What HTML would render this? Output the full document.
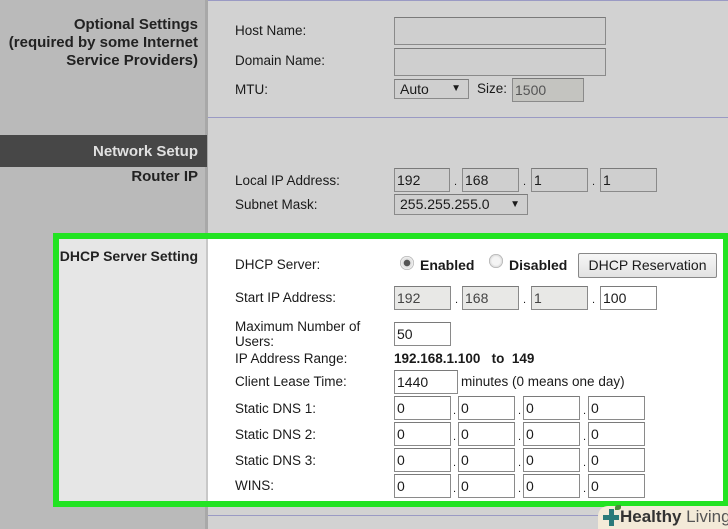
<!DOCTYPE html>
<html><head><meta charset="utf-8"><style>
*{box-sizing:border-box;margin:0;padding:0}
html,body{width:728px;height:529px;overflow:hidden}
body{position:relative;background:#d2d2d2;font-family:"Liberation Sans",Arial,sans-serif;font-size:13.5px;color:#1a1a1a}
.a{position:absolute;white-space:nowrap}
.in{position:absolute;border:1px solid #8a8a8a;background:#fff;font-size:14px;padding:2px 0 0 2px;line-height:18px;border-top-color:#7a7a7a}
.g{background:#cfcfcf}
.d{background:#e8e8e6}
.dot{position:absolute;font-size:11px}
.lh{font-weight:bold;text-align:right;font-size:15px}
</style></head><body>
<div class="a" style="left:0;top:0;width:207px;height:529px;background:#bababa"></div>
<div class="a" style="left:205px;top:0;width:3px;height:529px;background:#a8a8a8"></div>
<div class="a" style="left:208px;top:0;width:520px;height:1px;background:#9a9ac4"></div>
<div class="a" style="left:208px;top:117px;width:520px;height:1px;background:#9a9ac4"></div>
<div class="a" style="left:0;top:135px;width:207px;height:32px;background:#474747"></div>
<div class="a lh" style="right:530px;top:16px;line-height:18px;color:#222">Optional Settings<br>(required by some Internet<br>Service Providers)</div>
<div class="a lh" style="right:530px;top:143px;color:#e0e0e0">Network Setup</div>
<div class="a lh" style="right:530px;top:168px;color:#222">Router IP</div>

<div class="a" style="left:235px;top:23px">Host Name:</div>
<div class="a" style="left:235px;top:53px">Domain Name:</div>
<div class="a" style="left:235px;top:82px">MTU:</div>
<div class="in g" style="left:394px;top:17px;width:212px;height:28px"></div>
<div class="in g" style="left:394px;top:48px;width:212px;height:28px"></div>
<div class="in g" style="left:394px;top:79px;width:75px;height:20px;padding:0 0 0 5px;line-height:18px">Auto<span style="position:absolute;right:7px;font-size:10px">▼</span></div>
<div class="a" style="left:477px;top:81px">Size:</div>
<div class="in" style="left:512px;top:78px;width:72px;height:24px;background:#c4c4c0;color:#555">1500</div>

<div class="a" style="left:235px;top:173px">Local IP Address:</div>
<div class="a" style="left:235px;top:197px">Subnet Mask:</div>
<div class="in g" style="left:394px;top:168px;width:56px;height:24px">192</div>
<div class="dot" style="left:454px;top:176px">.</div>
<div class="in g" style="left:462px;top:168px;width:57px;height:24px">168</div>
<div class="dot" style="left:523px;top:176px">.</div>
<div class="in g" style="left:531px;top:168px;width:57px;height:24px">1</div>
<div class="dot" style="left:592px;top:176px">.</div>
<div class="in g" style="left:600px;top:168px;width:57px;height:24px">1</div>
<div class="in g" style="left:394px;top:194px;width:134px;height:21px;padding:0 0 0 5px;line-height:19px">255.255.255.0<span style="position:absolute;right:7px;font-size:10px">▼</span></div>

<div class="a" style="left:53px;top:233px;width:675px;height:274px;border:6px solid #22e322;border-right-width:5px;background:#fff"></div>
<div class="a" style="left:59px;top:239px;width:147px;height:262px;background:#e6e6e6"></div>
<div class="a" style="left:206px;top:239px;width:2px;height:262px;background:#c8c8c8"></div>
<div class="a" style="left:208px;top:515px;width:520px;height:1px;background:#9a9ac4"></div>
<div class="a lh" style="right:530px;top:248px;font-size:14px;color:#222">DHCP Server Setting</div>

<div class="a" style="left:235px;top:257px">DHCP Server:</div>
<div class="a" style="left:400px;top:256px;width:14px;height:14px;border-radius:50%;background:radial-gradient(circle,#555 0 3px,#ddd 3.5px,#eee 6px,#999 7px)"></div>
<div class="a" style="left:420px;top:257px;font-weight:bold;font-size:14px">Enabled</div>
<div class="a" style="left:489px;top:254px;width:14px;height:14px;border-radius:50%;background:radial-gradient(circle,#f4f4f4 0 4px,#ddd 6px,#999 7px)"></div>
<div class="a" style="left:509px;top:257px;font-weight:bold;font-size:14px">Disabled</div>
<div class="a" style="left:578px;top:253px;width:139px;height:25px;border:1px solid #888;border-radius:2px;background:linear-gradient(#f6f6f6,#e2e2e2);text-align:center;line-height:23px;font-size:14px">DHCP Reservation</div>

<div class="a" style="left:235px;top:290px">Start IP Address:</div>
<div class="in d" style="left:394px;top:286px;width:57px;height:24px;color:#444">192</div>
<div class="dot" style="left:455px;top:294px">.</div>
<div class="in d" style="left:462px;top:286px;width:57px;height:24px;color:#444">168</div>
<div class="dot" style="left:523px;top:294px">.</div>
<div class="in d" style="left:531px;top:286px;width:57px;height:24px;color:#444">1</div>
<div class="dot" style="left:592px;top:294px">.</div>
<div class="in" style="left:600px;top:286px;width:57px;height:24px">100</div>

<div class="a" style="left:235px;top:319px;line-height:15px">Maximum Number of<br>Users:</div>
<div class="in" style="left:394px;top:322px;width:57px;height:24px">50</div>
<div class="a" style="left:235px;top:351px">IP Address Range:</div>
<div class="a" style="left:394px;top:351px;font-weight:bold">192.168.1.100 &nbsp;&nbsp;to &nbsp;149</div>
<div class="a" style="left:235px;top:374px">Client Lease Time:</div>
<div class="in" style="left:394px;top:370px;width:64px;height:24px">1440</div>
<div class="a" style="left:461px;top:374px">minutes (0 means one day)</div>

<div class="a" style="left:235px;top:401px">Static DNS 1:</div>
<div class="a" style="left:235px;top:427px">Static DNS 2:</div>
<div class="a" style="left:235px;top:453px">Static DNS 3:</div>
<div class="a" style="left:235px;top:478px">WINS:</div>
<div id="rows"></div>
<script>
var h='';[396,422,448,474].forEach(function(y){[394,458,523,588].forEach(function(x,i){if(i)h+='<div class="dot" style="left:'+(x-5)+'px;top:'+(y+9)+'px">.</div>';h+='<div class="in" style="left:'+x+'px;top:'+y+'px;width:57px;height:24px">0</div>';});});document.getElementById('rows').innerHTML=h;
</script>

<div class="a" style="left:598px;top:506px;width:135px;height:26px;border-radius:10px 0 0 0;background:#f3ead8"></div>
<div class="a" style="left:603px;top:515px;width:16px;height:5px;background:#2b7a7a"></div>
<div class="a" style="left:609px;top:509px;width:5px;height:17px;background:#2b7a7a"></div>
<div class="a" style="left:615px;top:505px;width:6px;height:5px;border-radius:50% 0;background:#4a8a3a"></div>
<div class="a" style="left:620px;top:507px;font-size:17px;color:#333"><b>Healthy</b> <span style="color:#555">Living</span></div>
</body></html>
